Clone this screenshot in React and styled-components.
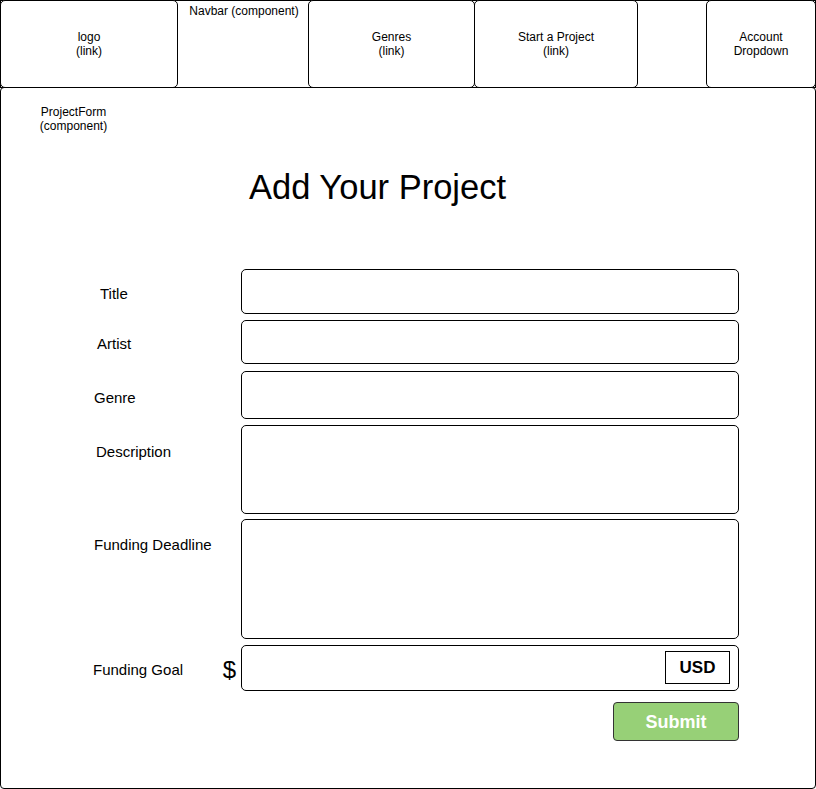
import React from "react";
import styled, { createGlobalStyle } from "styled-components";

const Global = createGlobalStyle`
  html, body { margin: 0; padding: 0; background: #fff; }
  body { font-family: "Liberation Sans", Arial, sans-serif; color: #000; }
  * { box-sizing: border-box; }
`;

const Page = styled.div`
  width: 816px;
  height: 789px;
  display: flex;
  flex-direction: column;
  overflow: hidden;
`;

const Navbar = styled.nav`
  height: 88px;
  border: 1px solid #000;
  display: flex;
  align-items: stretch;
  flex-shrink: 0;
`;

const NavBox = styled.div`
  width: ${(p) => p.$w}px;
  margin: -1px 0;
  margin-left: ${(p) => p.$ml || 0}px;
  margin-right: ${(p) => p.$mr || 0}px;
  border: 1px solid #000;
  border-radius: 5px;
  display: flex;
  align-items: center;
  justify-content: center;
  text-align: center;
  font-size: 12px;
  line-height: 14px;
  flex-shrink: 0;
  background: #fff;
`;

const NavTag = styled.div`
  width: ${(p) => p.$w}px;
  flex-shrink: 0;
  text-align: center;
  font-size: 12px;
  line-height: 14px;
  padding-top: 3px;
  padding-left: 2px;
`;

const Spacer = styled.div`
  flex: 1;
`;

const FormPanel = styled.section`
  height: 702px;
  margin-top: -1px;
  border: 1px solid #000;
  border-radius: 4px;
  display: flex;
  flex-direction: column;
  flex-shrink: 0;
`;

const FormTag = styled.div`
  width: 145px;
  margin-top: 17px;
  text-align: center;
  font-size: 12px;
  line-height: 14px;
`;

const Heading = styled.h1`
  margin: 34px 0 0 248px;
  font-size: 34.5px;
  font-weight: normal;
  line-height: 40px;
`;

const Fields = styled.div`
  margin-top: 62px;
  display: flex;
  flex-direction: column;
`;

const Row = styled.div`
  display: flex;
  margin-top: ${(p) => p.$mt || 0}px;
  height: ${(p) => p.$h}px;
`;

const LabelCell = styled.div`
  width: 240px;
  flex-shrink: 0;
  display: flex;
  align-items: ${(p) => (p.$top ? "flex-start" : "center")};
  justify-content: space-between;
  padding-left: ${(p) => p.$indent}px;
  padding-top: ${(p) => p.$dy || 0}px;
  padding-right: 5px;
`;

const Label = styled.label`
  font-size: 15px;
  line-height: 18px;
`;

const Dollar = styled.span`
  font-size: 24px;
  line-height: 28px;
`;

const Field = styled.div`
  width: 498px;
  height: 100%;
  border: 1px solid #000;
  border-radius: 5px;
  display: flex;
  align-items: flex-start;
  justify-content: flex-end;
  padding: 5px 8px 0 0;
`;

const Currency = styled.div`
  width: 65px;
  height: 33px;
  border: 1px solid #000;
  display: flex;
  align-items: center;
  justify-content: center;
  font-size: 17px;
  font-weight: bold;
`;

const Actions = styled.div`
  margin-top: 11px;
  display: flex;
  padding-left: 612px;
`;

const SubmitButton = styled.button`
  width: 126px;
  height: 39px;
  background: #97d077;
  border: 1px solid #333;
  border-radius: 4px;
  color: #fff;
  font-family: "Liberation Sans", Arial, sans-serif;
  font-weight: bold;
  font-size: 18px;
  padding: 1px 0 0;
`;

const rows = [
  { label: "Title", h: 45, mt: 0, indent: 99, dy: 4 },
  { label: "Artist", h: 44, mt: 6, indent: 96, dy: 3 },
  { label: "Genre", h: 48, mt: 7, indent: 93, dy: 5 },
  { label: "Description", h: 89, mt: 6, indent: 95, dy: 18, top: true },
  { label: "Funding Deadline", h: 120, mt: 5, indent: 93, dy: 17, top: true },
];

export default function App() {
  return (
    <Page>
      <Global />
      <Navbar>
        <NavBox $w={178} $ml={-1}>
          logo
          <br />
          (link)
        </NavBox>
        <NavTag $w={130}>Navbar (component)</NavTag>
        <NavBox $w={167}>
          Genres
          <br />
          (link)
        </NavBox>
        <NavBox $w={164} $ml={-1}>
          Start a Project
          <br />
          (link)
        </NavBox>
        <Spacer />
        <NavBox $w={110} $mr={-1}>
          Account
          <br />
          Dropdown
        </NavBox>
      </Navbar>
      <FormPanel>
        <FormTag>
          ProjectForm
          <br />
          (component)
        </FormTag>
        <Heading>Add Your Project</Heading>
        <Fields>
          {rows.map((r) => (
            <Row key={r.label} $h={r.h} $mt={r.mt}>
              <LabelCell $indent={r.indent} $dy={r.dy} $top={r.top}>
                <Label>{r.label}</Label>
              </LabelCell>
              <Field />
            </Row>
          ))}
          <Row $h={46} $mt={6}>
            <LabelCell $indent={92} $dy={3}>
              <Label>Funding Goal</Label>
              <Dollar>$</Dollar>
            </LabelCell>
            <Field>
              <Currency>USD</Currency>
            </Field>
          </Row>
        </Fields>
        <Actions>
          <SubmitButton type="button">Submit</SubmitButton>
        </Actions>
      </FormPanel>
    </Page>
  );
}
